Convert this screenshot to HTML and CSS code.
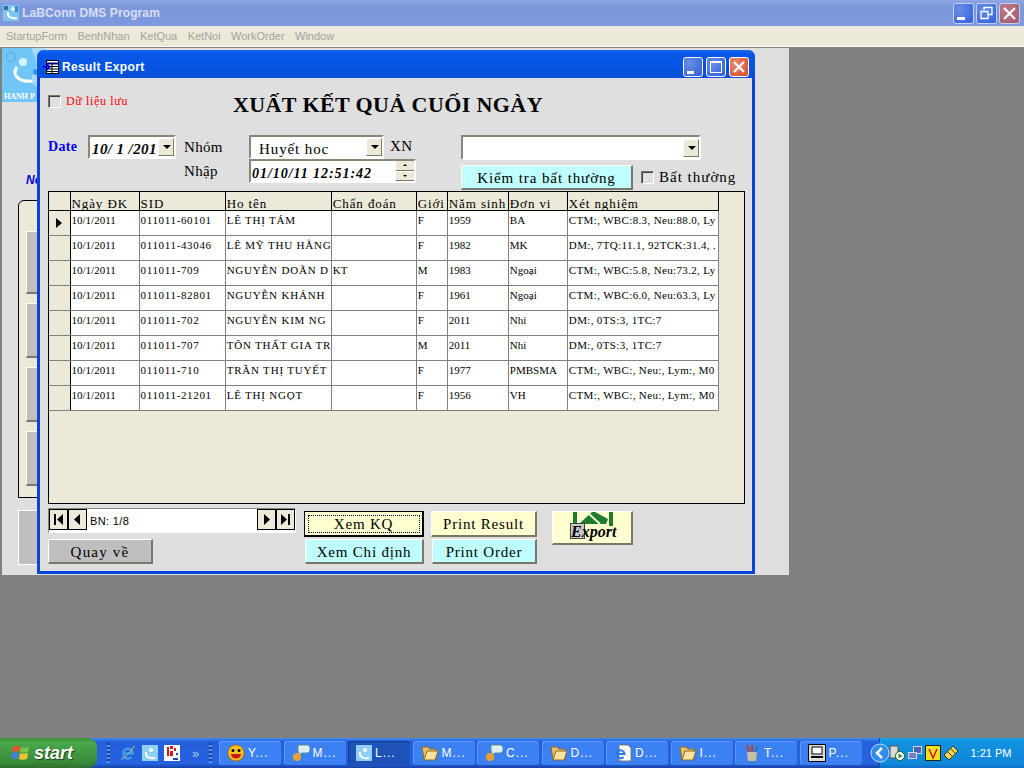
FILE: index.html
```html
<!DOCTYPE html>
<html lang="vi">
<head>
<meta charset="UTF-8">
<title>LaBConn DMS Program</title>
<link rel="stylesheet" href="styles.css">
</head>
<body>
<div class="app">
  <div class="app-title">
    <svg class="app-icon" width="16" height="16" viewBox="0 0 16 16"><rect width="16" height="16" fill="#7fc4ec"/><path d="M1 1h4v4H1z" fill="#2a6fb0"/><circle cx="10" cy="4" r="2" fill="#e4f6fd"/><path d="M5 7c-1 5 4 7 9 6" fill="none" stroke="#fff" stroke-width="2"/><path d="M12 1h3v6h-3z" fill="#2f8fd8"/></svg>
    <span class="app-name">LaBConn DMS Program</span>
    <div class="caps">
      <span class="cap cap-blue"><svg width="21" height="21" viewBox="0 0 21 21"><rect x="4" y="14" width="8" height="3" fill="#fff"/></svg></span>
      <span class="cap cap-blue"><svg width="21" height="21" viewBox="0 0 21 21"><path d="M8 7V4.500h8v7h-4M5 8.500h7v7H5z" fill="none" stroke="#fff" stroke-width="1.300"/></svg></span>
      <span class="cap cap-red"><svg width="21" height="21" viewBox="0 0 21 21"><path d="M5 5l11 11M16 5L5 16" stroke="#fff" stroke-width="2.200"/></svg></span>
    </div>
  </div>
  <div class="menu">
    <span>StartupForm</span><span>BenhNhan</span><span>KetQua</span><span>KetNoi</span><span>WorkOrder</span><span>Window</span>
  </div>
  <div class="desk">
    <div class="child">
      <div class="logo">
        <svg width="44" height="54" viewBox="0 0 44 54"><rect width="44" height="54" fill="#70c6f6"/><circle cx="9" cy="9" r="4.500" fill="none" stroke="#4f93c8" stroke-dasharray="2 1"/><circle cx="21" cy="14" r="4" fill="#d9f3fd"/><path d="M15 19c-6 8 2 16 18 14" fill="none" stroke="#fff" stroke-width="3"/><path d="M29 0h15v40H36c-6-4-8-10-4-16s3-12-3-24z" fill="#a8dcf8"/><circle cx="34" cy="24" r="3" fill="#2f9be0"/></svg>
        <span class="logo-text">HANH P</span>
      </div>
      <div class="side-head">No</div>
      <div class="side-panel">
        <div class="side-btn"></div><div class="side-btn"></div><div class="side-btn"></div><div class="side-btn"></div>
      </div>
      <div class="side-big"></div>
    </div>

    <div class="dlg">
      <div class="dlg-title">
        <svg class="dlg-icon" width="16" height="14" viewBox="0 0 16 14"><rect x="3.500" y=".5" width="12" height="13" fill="#fff" stroke="#000"/><path d="M3 3.500h12" stroke="#000080" stroke-width="2"/><path d="M9 3v10M4 6.500h11M4 9h11M4 11.500h11" stroke="#000"/><path d="M0 6h4V3.500L8 7l-4 3.500V8H0z" fill="#0000e0"/></svg>
        <span class="dlg-name">Result Export</span>
        <div class="caps caps-dlg">
          <span class="cap cap-blue"><svg width="21" height="21" viewBox="0 0 21 21"><rect x="4" y="14" width="7" height="3" fill="#fff"/></svg></span>
          <span class="cap cap-blue"><svg width="21" height="21" viewBox="0 0 21 21"><rect x="4.500" y="4.500" width="11" height="11" fill="none" stroke="#fff"/><rect x="4" y="4" width="12" height="2" fill="#fff"/></svg></span>
          <span class="cap cap-red"><svg width="21" height="21" viewBox="0 0 21 21"><path d="M5 5l10 10M15 5L5 15" stroke="#fff" stroke-width="2.200"/></svg></span>
        </div>
      </div>
      <div class="dlg-body">
        <div class="head-row">
          <label class="check saved"><i class="box"></i>Dữ liệu lưu</label>
          <h1 class="big-title">XUẤT KẾT QUẢ CUỐI NGÀY</h1>
        </div>

        <div class="filter">
          <div class="date-col">
            <span class="date-label">Date</span>
            <div class="field date-box"><span class="date-val">10/ 1 /201</span><i class="drop"></i></div>
          </div>
          <div class="mid-col">
            <div class="mid-row">
              <span class="lbl">Nhóm</span>
              <div class="field combo-group"><span class="combo-val">Huyết hoc</span><i class="drop"></i></div>
              <span class="lbl lbl-xn">XN</span>
            </div>
            <div class="mid-row">
              <span class="lbl">Nhập</span>
              <div class="field stamp"><span class="stamp-val">01/10/11 12:51:42</span><i class="spin"><b class="up"></b><b class="down"></b></i></div>
            </div>
          </div>
          <div class="right-col">
            <div class="field combo-xn"><i class="drop"></i></div>
            <div class="right-row">
              <div class="btn btn-cyan btn-check">Kiểm tra bất thường</div>
              <label class="check odd"><i class="box"></i>Bất thường</label>
            </div>
          </div>
        </div>

        <div class="grid-wrap">
          <table class="grid">
            <colgroup>
              <col class="c0"><col class="c1"><col class="c2"><col class="c3"><col class="c4"><col class="c5"><col class="c6"><col class="c7"><col class="c8">
            </colgroup>
            <thead>
              <tr><th></th><th>Ngày ĐK</th><th>SID</th><th>Ho tên</th><th>Chẩn đoán</th><th>Giới</th><th>Năm sinh</th><th>Đơn vi</th><th>Xét nghiệm</th></tr>
            </thead>
            <tbody>
              <tr><th class="cur"><i class="arrow"></i></th><td>10/1/2011</td><td>011011-60101</td><td>LÊ THỊ TÁM</td><td></td><td>F</td><td>1959</td><td>BA</td><td>CTM:, WBC:8.3, Neu:88.0, Ly</td></tr>
              <tr><th></th><td>10/1/2011</td><td>011011-43046</td><td>LÊ MỸ THU HẰNG</td><td></td><td>F</td><td>1982</td><td>MK</td><td>DM:, 7TQ:11.1, 92TCK:31.4, .</td></tr>
              <tr><th></th><td>10/1/2011</td><td>011011-709</td><td>NGUYỄN DOÃN D</td><td>KT</td><td>M</td><td>1983</td><td>Ngoại</td><td>CTM:, WBC:5.8, Neu:73.2, Ly</td></tr>
              <tr><th></th><td>10/1/2011</td><td>011011-82801</td><td>NGUYỄN KHÁNH</td><td></td><td>F</td><td>1961</td><td>Ngoại</td><td>CTM:, WBC:6.0, Neu:63.3, Ly</td></tr>
              <tr><th></th><td>10/1/2011</td><td>011011-702</td><td>NGUYỄN KIM NG</td><td></td><td>F</td><td>2011</td><td>Nhi</td><td>DM:, 0TS:3, 1TC:7</td></tr>
              <tr><th></th><td>10/1/2011</td><td>011011-707</td><td>TÔN THẤT GIA TR</td><td></td><td>M</td><td>2011</td><td>Nhi</td><td>DM:, 0TS:3, 1TC:7</td></tr>
              <tr><th></th><td>10/1/2011</td><td>011011-710</td><td>TRẦN THỊ TUYẾT</td><td></td><td>F</td><td>1977</td><td>PMBSMA</td><td>CTM:, WBC:, Neu:, Lym:, M0</td></tr>
              <tr><th></th><td>10/1/2011</td><td>011011-21201</td><td>LÊ THỊ NGỌT</td><td></td><td>F</td><td>1956</td><td>VH</td><td>CTM:, WBC:, Neu:, Lym:, M0</td></tr>
            </tbody>
          </table>
        </div>

        <div class="foot">
          <div class="foot-left">
            <div class="pager">
              <span class="pg"><svg width="15" height="15" viewBox="0 0 15 15"><path d="M3 2h2v11H3zM12 2v11L6 7.500z"/></svg></span>
              <span class="pg"><svg width="15" height="15" viewBox="0 0 15 15"><path d="M10 2v11L4 7.500z"/></svg></span>
              <span class="pg-text">BN: 1/8</span>
              <span class="pg"><svg width="15" height="15" viewBox="0 0 15 15"><path d="M5 2v11l6-5.500z"/></svg></span>
              <span class="pg"><svg width="15" height="15" viewBox="0 0 15 15"><path d="M3 2v11l6-5.500zM10 2h2v11h-2z"/></svg></span>
            </div>
            <div class="btn btn-grey btn-back">Quay về</div>
          </div>
          <div class="foot-btns">
            <div class="btn btn-yellow btn-focus"><span class="focus-ring">Xem KQ</span></div>
            <div class="btn btn-yellow">Print Result</div>
            <div class="btn btn-cyan btn-nudge">Xem Chỉ định</div>
            <div class="btn btn-cyan btn-nudge">Print Order</div>
          </div>
          <div class="btn btn-yellow btn-export">
            <svg class="export-icon" width="44" height="28" viewBox="0 0 44 28"><path d="M3 0h4v14H3zM39 0h4v14h-4z" fill="#1f7a2c"/><path d="M9 12L22 0h3l13 7-2 5z" fill="#1f7a2c"/><path d="M18 1l12 11" stroke="#eef6e0" stroke-width="2"/><rect x=".5" y="11.500" width="14" height="15" fill="#c8c8c8" stroke="#444"/></svg>
            <span class="export-text">Export</span>
          </div>
        </div>
      </div>
    </div>
  </div>
  <div class="taskbar">
    <div class="start">
      <svg width="20" height="18" viewBox="0 0 20 18"><path d="M2 3c3-2 5-1 7 0L8 8C6 7 4 7 1 8z" fill="#e8552a"/><path d="M10 3c3 1 5 1 8-1l-1 6c-3 1-5 1-8 0z" fill="#7cc24a"/><path d="M1 9c3-1 5-1 7 0l-1 6c-2-1-4-1-7 0z" fill="#3f7fe0"/><path d="M9 9c2 1 4 1 8 0l-1 6c-3 1-6 1-8 0z" fill="#f4c430"/></svg>
      <span>start</span>
    </div>
    <i class="grip"></i>
    <div class="quick">
      <svg width="16" height="16" viewBox="0 0 18 18"><path d="M3.500 9.500h11a5.500 5.500 0 1 0-1.500 4" fill="none" stroke="#3aa0ea" stroke-width="2.600"/><path d="M1 16C4 16 13 7 16 1" fill="none" stroke="#e8c860"/></svg>
      <svg width="16" height="16" viewBox="0 0 16 16"><rect width="16" height="16" fill="#8fd0f4"/><circle cx="9" cy="5" r="2" fill="#fff"/><path d="M4 7c-1 5 4 7 9 6" fill="none" stroke="#fff" stroke-width="2"/></svg>
      <svg width="16" height="16" viewBox="0 0 16 16"><rect width="16" height="16" fill="#fff"/><path d="M3 2h2v9H3zM6 1h3v3H6zM6 6h3v5H6zM10 3h2v3h-2z" fill="#d01818"/><path d="M12 8h2v2h-2zM9 13h5v2H9z" fill="#2040d0"/></svg>
    </div>
    <span class="more">»</span>
    <i class="grip grip-b"></i>
    <div class="tasks">
      <div class="task">
        <svg width="18" height="18" viewBox="0 0 18 18"><circle cx="9" cy="9" r="8" fill="#f7c21a" stroke="#b86c10"/><circle cx="6" cy="6.500" r="1.500"/><circle cx="12" cy="6.500" r="1.500"/><path d="M4 10h10c0 6-10 6-10 0z" fill="#c81818"/></svg><span>Y...</span>
      </div>
      <div class="task">
        <svg width="18" height="18" viewBox="0 0 18 18"><path d="M6 1h10l2 2v4l-2 2h-6l-3 2v-2l-1-2V3z" fill="#dfeef0" stroke="#5a8f90"/><circle cx="5" cy="13" r="4" fill="#e8a030"/></svg><span>M...</span>
      </div>
      <div class="task task-on">
        <svg width="16" height="16" viewBox="0 0 16 16"><rect width="16" height="16" fill="#8fd0f4"/><circle cx="9" cy="5" r="2" fill="#fff"/><path d="M4 7c-1 5 4 7 9 6" fill="none" stroke="#fff" stroke-width="2"/></svg><span>L...</span>
      </div>
      <div class="task">
        <svg width="18" height="16" viewBox="0 0 18 16"><path d="M1 2h6l2 2h6v10H3z" fill="#e8c070" stroke="#8a6a20"/><path d="M6 6h11l-3 9H3z" fill="#f8e4a0" stroke="#8a6a20"/></svg><span>M...</span>
      </div>
      <div class="task">
        <svg width="18" height="18" viewBox="0 0 18 18"><path d="M6 1h10l2 2v4l-2 2h-6l-3 2v-2l-1-2V3z" fill="#dfeef0" stroke="#5a8f90"/><circle cx="5" cy="13" r="4" fill="#e8a030"/></svg><span>C...</span>
      </div>
      <div class="task">
        <svg width="18" height="16" viewBox="0 0 18 16"><path d="M1 2h6l2 2h6v10H3z" fill="#e8c070" stroke="#8a6a20"/><path d="M6 6h11l-3 9H3z" fill="#f8e4a0" stroke="#8a6a20"/></svg><span>D...</span>
      </div>
      <div class="task">
        <svg width="18" height="18" viewBox="0 0 18 18"><path d="M5 1h9l3 3v13H5z" fill="#fff" stroke="#777"/><path d="M2.500 10h8a4 4 0 1 0-1 3" fill="none" stroke="#2a78d8" stroke-width="2"/></svg><span>D...</span>
      </div>
      <div class="task">
        <svg width="18" height="16" viewBox="0 0 18 16"><path d="M1 2h6l2 2h6v10H3z" fill="#e8c070" stroke="#8a6a20"/><path d="M6 6h11l-3 9H3z" fill="#f8e4a0" stroke="#8a6a20"/></svg><span>I...</span>
      </div>
      <div class="task">
        <svg width="18" height="18" viewBox="0 0 18 18"><path d="M4 8h10l-1 9H5z" fill="#c8c0a0"/><path d="M6 8L4 1M9 8V1" stroke="#c04020" stroke-width="2"/><path d="M12 8l3-6" stroke="#3070c0" stroke-width="2"/></svg><span>T...</span>
      </div>
      <div class="task">
        <svg width="18" height="18" viewBox="0 0 18 18"><rect x=".5" y=".5" width="17" height="17" fill="#ddd" stroke="#000"/><rect x="4" y="3" width="10" height="7" fill="#fff" stroke="#000"/><path d="M3 13h12" stroke="#000" stroke-width="2"/></svg><span>P...</span>
      </div>
    </div>
    <div class="back-arrow"><svg width="20" height="20" viewBox="0 0 20 20"><circle cx="10" cy="10" r="9" fill="#2f8ce8" stroke="#bfe0fa"/><path d="M12 5l-5 5 5 5" fill="none" stroke="#fff" stroke-width="2.500"/></svg></div>
    <div class="tray">
      <svg width="16" height="16" viewBox="0 0 16 16"><rect x="1" y="1" width="8" height="12" fill="#d8d8d8" stroke="#555"/><circle cx="11" cy="11" r="4.500" fill="#fff" stroke="#206020"/><path d="M9.500 8.500v5l4-2.500z" fill="#209020"/></svg>
      <svg width="16" height="16" viewBox="0 0 16 16"><rect x="6.500" y="1.500" width="8" height="7" fill="#5060b0" stroke="#d0d8f0"/><rect x="1.500" y="7.500" width="8" height="6" fill="#7080c0" stroke="#d0d8f0"/></svg>
      <svg width="16" height="16" viewBox="0 0 16 16"><rect x=".5" y=".5" width="15" height="15" fill="#f0e020" stroke="#222"/><path d="M4 4l4 9 4-9" fill="none" stroke="#d01010" stroke-width="1.500"/></svg>
      <svg width="16" height="16" viewBox="0 0 16 16"><path d="M1 10L10 1l5 5-9 9z" fill="#f0d840" stroke="#333"/><path d="M5 7l4 4M8 4l4 4" stroke="#333"/></svg>
      <span class="clock">1:21 PM</span>
    </div>
  </div>
</div>
</body>
</html>
```
FILE: styles.css
```css
*{box-sizing:border-box;}
html,body{margin:0;height:100%;overflow:hidden;}
body{font-family:"Liberation Serif",serif;color:#000;}
.app{width:1024px;height:768px;display:flex;flex-direction:column;background:#808080;}

/* main window, inactive */
.app-title{height:26px;flex:none;display:flex;align-items:center;padding:0 4px 0 3px;background:linear-gradient(#8fa6e2,#7d97dc 30%,#7e98dd);color:#d8dff2;}
.app-icon{margin-right:3px;}
.app-name{font:bold 12px "Liberation Sans",sans-serif;letter-spacing:.1px;}
.caps{margin-left:auto;display:flex;gap:2px;}
.cap{width:21px;height:21px;border:1px solid #c4d2f0;border-radius:3px;display:block;}
.cap svg{display:block;margin:-1px;}
.cap-blue{background:radial-gradient(circle at 30% 30%,#6a8ee8,#2f5fd8);}
.cap-red{background:radial-gradient(circle at 30% 30%,#b87a88,#a05a6c);}
.menu{height:20px;flex:none;display:flex;gap:10.400px;align-items:center;padding:0 6px;background:#ece9d8;color:#a5a39a;font:11px "Liberation Sans",sans-serif;}
.desk{flex:1;position:relative;background:#808080;border-top:1px solid #fff;}

/* mdi child under the dialog */
.child{position:absolute;left:0;top:0;width:789px;height:528px;background:#dfdfdf;border-top:1px solid #808080;border-left:2px solid #808080;}
.logo{position:absolute;left:0;top:0;width:44px;height:54px;overflow:hidden;}
.logo svg{display:block;}
.logo-text{position:absolute;left:2px;bottom:1px;color:#fff;font:bold 8px "Liberation Serif",serif;white-space:nowrap;}
.side-head{position:absolute;left:24px;top:125px;color:#0000e0;font:italic bold 12px "Liberation Sans",sans-serif;}
.side-panel{position:absolute;left:16px;top:152px;width:60px;height:298px;background:#ece9d8;border:1px solid #000;border-top-left-radius:6px;padding:30px 0 0 7px;display:flex;flex-direction:column;gap:9px;}
.side-btn{width:30px;height:55px;background:#bfbfbf;border:1px solid #fff;border-bottom:2px solid #7b7768;border-right-color:#7b7768;}
.side-btn:first-child{height:63px;}
.side-big{position:absolute;left:16px;top:462px;width:40px;height:55px;background:#bfbfbf;border:1px solid #fff;}

/* dialog window */
.dlg{position:absolute;left:37px;top:3px;width:718px;height:524px;display:flex;flex-direction:column;border-radius:7px 7px 0 0;background:#0a4de0;border:3px solid #0a44d8;border-top:0;}
.dlg-title{height:28px;flex:none;display:flex;align-items:center;padding:5px 6px 0 6px;margin:0 -3px;background:linear-gradient(#1a6af0,#0a58ea 10%,#0553e0 60%,#0a4fd8);border-radius:7px 7px 0 0;color:#fff;}
.dlg-icon{margin-right:3px;}
.dlg-name{font:bold 12px "Liberation Sans",sans-serif;letter-spacing:.35px;}
.caps-dlg{gap:3px;}
.caps-dlg .cap{width:20px;height:20px;border-color:#fff;}
.caps-dlg .cap-red{background:radial-gradient(circle at 30% 30%,#ea8a70,#d44a28);}
.dlg-body{flex:1;background:#dfdfdf;padding:0 0 0 8px;display:flex;flex-direction:column;min-height:0;}

.head-row{height:57px;flex:none;display:flex;padding-top:17px;}
.check{display:flex;align-items:center;gap:5px;white-space:nowrap;}
.box{width:13px;height:13px;display:block;background:#dfdfdf;border:1px solid #fff;border-top-color:#7b7768;border-left-color:#7b7768;box-shadow:inset 1px 1px 0 #404040;flex:none;}
.saved{width:185px;height:13px;color:#f00;font-size:12px;letter-spacing:.65px;}
.big-title{margin:0;font:bold 22px/20px "Liberation Serif",serif;letter-spacing:.4px;height:22px;white-space:nowrap;}

.filter{height:56px;flex:none;display:flex;}
.date-col{width:136px;display:flex;align-items:flex-start;flex:none;}
.date-label{width:40px;color:#00f;font:bold 14px/24px "Liberation Serif",serif;letter-spacing:.3px;}
.field{background:#fff;border:2px solid #8a877a;border-right-color:#fff;border-bottom-color:#fff;display:flex;align-items:center;overflow:hidden;}
.date-box{width:88px;height:24px;}
.date-val{flex:1;min-width:0;padding:5px 0 0 2px;font:italic bold 15px "Liberation Serif",serif;white-space:nowrap;overflow:hidden;letter-spacing:.4px;}
.drop{width:16px;height:18px;flex:none;position:relative;background:#ece9d8;border:1px solid #fff;border-right-color:#7b7768;border-bottom-color:#7b7768;}
.drop::after{content:"";position:absolute;left:4px;top:6px;border:4px solid transparent;border-top:4px solid #000;border-bottom:0;}
.mid-col{width:277px;flex:none;display:flex;flex-direction:column;}
.mid-row{display:flex;height:24px;align-items:flex-start;}
.lbl{width:65px;font-size:15px;line-height:25px;letter-spacing:.3px;flex:none;}
.lbl-xn{width:auto;margin-left:6px;line-height:22px;}
.combo-group{width:135px;height:24px;flex:none;}
.combo-val{flex:1;padding:4px 0 0 8px;font-size:15px;line-height:16px;height:20px;overflow:hidden;letter-spacing:.9px;}
.stamp{width:167px;height:24px;flex:none;}
.stamp-val{flex:1;padding:6px 0 0 1px;font:italic bold 14px "Liberation Serif",serif;letter-spacing:.95px;white-space:nowrap;}
.spin{width:18px;height:20px;display:flex;flex-direction:column;flex:none;gap:1px;}
.spin b{flex:1;background:#ece9d8;position:relative;border-bottom:1px solid #7b7768;}
.spin b::after{content:"";position:absolute;left:7px;top:3px;border:2px solid transparent;}
.spin .up::after{border-bottom:2px solid #000;border-top:0;}
.spin .down::after{border-top:2px solid #000;border-bottom:0;}
.right-col{width:290px;flex:none;display:flex;flex-direction:column;gap:5px;}
.combo-xn{width:240px;height:25px;justify-content:flex-end;}
.right-row{display:flex;align-items:center;gap:8px;}
.btn{display:flex;align-items:center;justify-content:center;padding-top:2px;border:1px solid #fff;border-right:2px solid #7b7768;border-bottom:2px solid #7b7768;font-size:15px;letter-spacing:.8px;white-space:nowrap;}
.btn-cyan{background:#bfffff;}
.btn-yellow{background:#ffffcf;}
.btn-grey{background:#bfbfbf;}
.btn-check{width:172px;height:25px;letter-spacing:.9px;}
.odd{font-size:15px;letter-spacing:1px;}

/* data grid */
.grid-wrap{width:697px;height:313px;flex:none;background:#ece9d8;border:1px solid #000;overflow:hidden;}
.grid{border-collapse:collapse;table-layout:fixed;width:670px;font-size:11px;}
.c0{width:21px;}.c1{width:69px;}.c2{width:86px;}.c3{width:106px;}.c4{width:85px;}.c5{width:31px;}.c6{width:61px;}.c7{width:59px;}.c8{width:151px;}
.grid thead th{height:18px;background:#ece9d8;border:1px solid #000;border-top:0;font:normal 13px/13px "Liberation Serif",serif;text-align:left;padding:5px 0 0 1px;white-space:nowrap;overflow:hidden;letter-spacing:.9px;}
.grid thead th:first-child{border-left:0;}
.grid tbody tr{height:25px;}
.grid tbody th{background:#ece9d8;border:1px solid #808080;border-left:0;border-right:1px solid #000;padding:0;position:relative;}
.grid tbody td{background:#fff;border:1px solid #808080;padding:0 0 7px 1px;white-space:nowrap;overflow:hidden;line-height:14px;}
.grid tbody td:nth-child(3){letter-spacing:.65px;}
.grid tbody td:nth-child(4){letter-spacing:.8px;}
.grid tbody td:last-child{letter-spacing:.35px;}
.arrow{position:absolute;left:7px;top:7px;border:5px solid transparent;border-left:6px solid #000;border-right:0;}

/* bottom controls */
.foot{flex:1;display:flex;padding-top:4px;}
.foot-left{width:256px;flex:none;display:flex;flex-direction:column;gap:6px;}
.pager{width:248px;height:25px;display:flex;align-items:flex-start;background:#fff;border:1px solid #8a877a;border-right-color:#fff;border-bottom-color:#fff;}
.pg{width:19px;height:21px;display:flex;align-items:center;justify-content:center;background:#ece9d8;border:1px solid #000;flex:none;}
.pg-text{flex:1;padding:6px 0 0 3px;font:11px "Liberation Sans",sans-serif;letter-spacing:.35px;}
.btn-back{width:105px;height:25px;letter-spacing:1.200px;}
.foot-btns{width:233px;flex:none;display:grid;grid-template-columns:120px 106px;gap:2px 7px;grid-template-rows:26px 25px;padding-top:3px;}
.btn-nudge{margin-left:1px;}
.btn-focus{padding-top:0;border:1px solid #000;border-right:2px solid #000;border-bottom:2px solid #000;}
.focus-ring{width:112px;height:18px;padding-top:2px;border:1px dotted #000;display:flex;align-items:center;justify-content:center;}
.btn-export{width:81px;height:34px;margin:3px 0 0 15px;position:relative;}
.export-icon{position:absolute;left:17px;top:0;}
.export-text{position:absolute;left:18px;top:11px;font:italic bold 16px "Liberation Serif",serif;letter-spacing:0;}

/* taskbar */
.taskbar{height:30px;flex:none;display:flex;align-items:center;background:linear-gradient(#3f8cf3,#245edb 12%,#2663e0 85%,#1941a5);color:#fff;font:12px "Liberation Sans",sans-serif;}
.start{width:97px;height:30px;flex:none;display:flex;align-items:center;gap:3px;padding-left:11px;background:linear-gradient(#3c8f3c,#4aa84a 15%,#3a8a3a 80%,#2f6f2f);border-radius:0 9px 9px 0;font:italic bold 18px "Liberation Sans",sans-serif;text-shadow:1px 1px 1px #1c401c;}
.grip{width:3px;height:20px;margin:0 10px;flex:none;background:repeating-linear-gradient(#1a3f9c 0 2px,#5e92ec 2px 4px);}
.grip-b{margin:0 7px 0 0;}
.quick{display:flex;gap:6px;align-items:center;}
.more{width:17px;margin-left:12px;color:#b8d0f8;font-size:13px;flex:none;}
.tasks{display:flex;gap:2.500px;}
.task{width:62px;height:24px;flex:none;display:flex;align-items:center;gap:3px;padding-left:8px;border-radius:3px;background:#3c81f3;box-shadow:inset 1px 1px 0 #5e9af5;letter-spacing:1px;}
.task-on{background:#1e52b7;box-shadow:inset 1px 1px 1px #143a85;}
.back-arrow{margin:0 -11px 0 8px;width:20px;height:20px;flex:none;position:relative;z-index:1;}
.back-arrow svg{display:block;}
.tray{flex:1;height:30px;display:flex;align-items:center;gap:2px;padding-left:9px;background:linear-gradient(#14a0e8,#1290e0 15%,#1088d8 85%,#0f6fc8);border-left:1px solid #0a4fb0;}
.clock{margin-left:10px;font-size:11px;white-space:nowrap;}
```
